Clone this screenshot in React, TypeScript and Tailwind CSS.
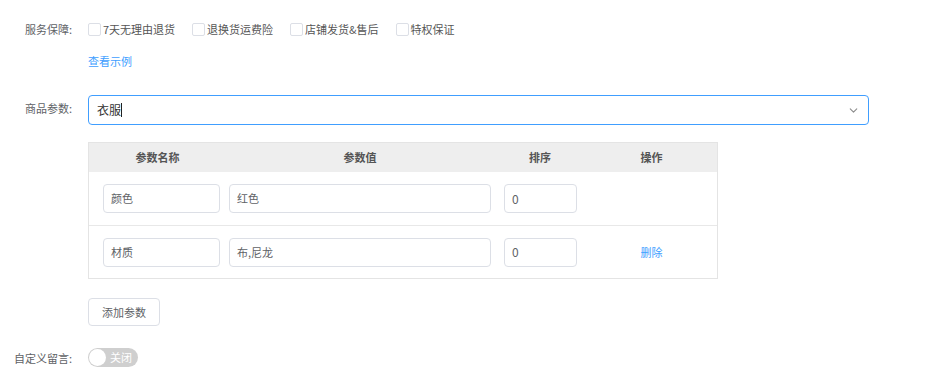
import { ChevronDown } from "lucide-react";

const services = ["7天无理由退货", "退换货运费险", "店铺发货&售后", "特权保证"];

const params = [
  { name: "颜色", value: "红色", sort: "0", removable: false },
  { name: "材质", value: "布,尼龙", sort: "0", removable: true },
];

const Label = ({ children }: { children: React.ReactNode }) => (
  <div className="w-[72px] shrink-0 text-right text-[11px] leading-[16px] text-[#606266] whitespace-nowrap">{children}</div>
);

const Field = ({ value, className }: { value: string; className: string }) => (
  <div
    className={`h-[29px] border border-[#dcdfe6] rounded-[4px] bg-white flex items-center px-[7px] text-[11px] text-[#606266] ${className}`}
  >
    {value}
  </div>
);

export default function App() {
  return (
    <div
      className="w-[944px] h-[385px] bg-white overflow-hidden"
      style={{ fontFamily: '"Noto Sans CJK SC", "Noto Sans", sans-serif' }}
    >
      {/* 服务保障 */}
      <div className="flex items-center gap-4 pt-[21px]">
        <Label>服务保障:</Label>
        <div className="flex items-center h-[14px]">
          {services.map((s) => (
            <label key={s} className="flex items-center h-[14px] mr-[17px] text-[11px] leading-[14px] text-[#555]">
              <span className="w-[13px] h-[13px] border border-[#dcdfe6] rounded-[2px] bg-white mr-[2px]" />
              {s}
            </label>
          ))}
        </div>
      </div>
      <div className="pl-[88px] mt-[16px] text-[11px] leading-[16px] text-[#409eff]">查看示例</div>

      {/* 商品参数 */}
      <div className="flex gap-4 mt-[26px]">
        <Label>
          <div className="mt-[5px]">商品参数:</div>
        </Label>
        <div>
          <div className="w-[781px] h-[30px] border border-[#409eff] rounded-[4px] flex items-center justify-between pl-[8px] pr-[8px]">
            <span className="flex items-center text-[12px] text-[#333]">
              衣服
              <span className="inline-block w-px h-[14px] bg-[#222]" />
            </span>
            <ChevronDown className="w-[13px] h-[13px] text-[#8c8c8c]" strokeWidth={2} />
          </div>

          <div className="w-[630px] mt-[17px] border border-[#e4e4e4]">
            <div className="grid grid-cols-[137px_268px_92px_1fr] h-[29px] bg-[#eeeeee] items-center text-[11px] font-bold text-[#555] text-center">
              <div>参数名称</div>
              <div>参数值</div>
              <div>排序</div>
              <div>操作</div>
            </div>
            {params.map((p, i) => (
              <div
                key={p.name}
                className={`grid grid-cols-[137px_268px_92px_1fr] items-center ${i > 0 ? "border-t border-[#e8e8e8] h-[53px]" : "h-[53px]"}`}
              >
                <div className="pl-[14px]">
                  <Field value={p.name} className="w-[117px]" />
                </div>
                <div className="pl-[3px]">
                  <Field value={p.value} className="w-[262px]" />
                </div>
                <div className="pl-[10px]">
                  <Field value={p.sort} className="w-[73px] text-[12px] text-[#333]" />
                </div>
                <div className="text-center text-[11px] text-[#409eff]">{p.removable ? "删除" : ""}</div>
              </div>
            ))}
          </div>

          <button className="mt-[19px] h-[28px] w-[72px] border border-[#dcdfe6] rounded-[4px] bg-white text-[11px] text-[#606266]">
            添加参数
          </button>
        </div>
      </div>

      {/* 自定义留言 */}
      <div className="flex items-center gap-4 mt-[22px]">
        <Label>自定义留言:</Label>
        <div className="relative w-[50px] h-[19px] rounded-full bg-[#cfcfcf] flex items-center justify-end pr-[6px]">
          <span className="absolute left-[1px] top-[1px] w-[17px] h-[17px] rounded-full bg-white" />
          <span className="text-[11px] leading-none text-white">关闭</span>
        </div>
      </div>
    </div>
  );
}
